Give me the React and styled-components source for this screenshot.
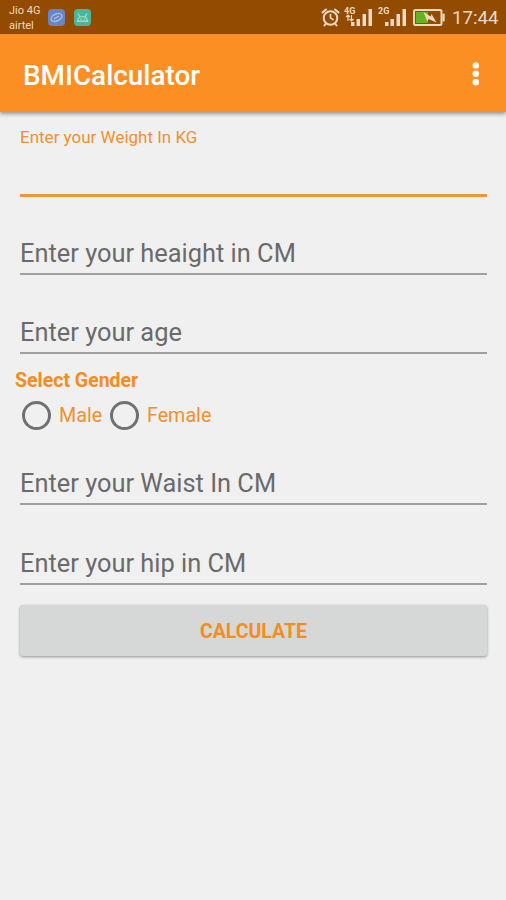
import React, { useState } from "react";
import styled, { createGlobalStyle } from "styled-components";

const GlobalStyle = createGlobalStyle`
  * {
    box-sizing: border-box;
  }

  body {
    margin: 0;
    background-color: #f0f0f0;
    font-family: Roboto, sans-serif;
  }
`;

const Container = styled.div`
  display: flex;
  flex-direction: column;
  width: 506px;
  height: 900px;
  background-color: #f0f0f0;
  overflow: hidden;
`;

const StatusBar = styled.div`
  display: flex;
  flex-direction: row;
  align-items: center;
  justify-content: space-between;
  height: 34px;
  padding: 0 7px 0 9px;
  background-color: #934b00;
  color: #eed9c5;
`;

const StatusGroup = styled.div`
  display: flex;
  flex-direction: row;
  align-items: center;
`;

const Carriers = styled.div`
  display: flex;
  flex-direction: column;
  width: 39px;
  padding-top: 2px;
  font-size: 11px;
  line-height: 15px;
  white-space: nowrap;
`;

const AppIcon = styled.svg`
  width: 17px;
  height: 17px;
  margin-right: 9px;
  border-radius: 4px;
  background-color: ${(props) => props.$color};
`;

const StatusIcon = styled.svg`
  width: ${(props) => props.$width}px;
  height: 24px;
  margin-right: ${(props) => props.$gap}px;
`;

const NetworkType = styled.text`
  font-size: 9px;
  font-weight: bold;
  fill: #eed9c5;
`;

const Clock = styled.div`
  width: 47px;
  font-size: 18.7px;
  line-height: 24px;
  padding-top: 2px;
`;

const Header = styled.div`
  display: flex;
  flex-direction: row;
  align-items: center;
  justify-content: space-between;
  height: 78px;
  padding: 2px 26px 0 23px;
  background-color: #fb8f23;
  color: white;
  box-shadow: 0 2px 4px 0 rgba(0, 0, 0, 0.38);
`;

const AppName = styled.div`
  padding-top: 3px;
  font-size: 27.9px;
  font-weight: 500;
  line-height: 34px;
`;

const MenuIcon = styled.svg`
  width: 9px;
  height: 26px;
`;

const Form = styled.div`
  display: flex;
  flex-direction: column;
  padding: 15px 19px 0 20px;
`;

const FloatingLabel = styled.div`
  color: #f0902e;
  font-size: 17px;
  line-height: 20px;
`;

const Field = styled.label`
  display: flex;
  flex-direction: column;
  justify-content: flex-end;
  height: ${(props) => props.$height}px;
  padding-bottom: 5px;
  border-bottom: ${(props) => (props.$active ? "3px solid #f0963a" : "2px solid #a0a0a0")};
  color: #6a6a6a;
  font-size: 25.4px;
  line-height: 30px;
`;

const GenderTitle = styled.div`
  margin: 15px 0 0 -5px;
  color: #f58d1c;
  font-size: 19.5px;
  font-weight: bold;
  line-height: 24px;
`;

const GenderGroup = styled.div`
  display: flex;
  flex-direction: row;
  align-items: center;
  height: 34px;
  margin: 5px 0 0 2px;
`;

const RadioOption = styled.div`
  display: flex;
  flex-direction: row;
  align-items: center;
  width: ${(props) => props.$width}px;
  color: #f0902e;
  font-size: 19.7px;
  line-height: 24px;
  cursor: pointer;
`;

const RadioCircle = styled.div`
  display: flex;
  align-items: center;
  justify-content: center;
  flex-shrink: 0;
  width: 29px;
  height: 29px;
  margin-right: 8px;
  border: 3px solid #717171;
  border-radius: 50%;
`;

const RadioName = styled.span`
  padding-top: 2px;
`;

const RadioDot = styled.div`
  width: 14px;
  height: 14px;
  border-radius: 50%;
  background-color: #f0902e;
`;

const CalculateButton = styled.button`
  height: 51px;
  margin-top: 20px;
  padding: 2px 0 0;
  border: none;
  border-radius: 3px;
  background-color: #d6d8d7;
  box-shadow: 0 1px 3px 0 rgba(0, 0, 0, 0.4);
  color: #f58d1c;
  font-family: inherit;
  font-size: 19.5px;
  font-weight: bold;
  line-height: 24px;
`;

const SignalIcon = ({ type, sub, width, gap }) => (
  <StatusIcon $width={width} $gap={gap} viewBox={`0 0 ${width} 24`}>
    <NetworkType x="0" y="8.5">{type}</NetworkType>
    {sub && (
      <path
        d="M4 10v6M2 12l2-2 2 2M7.5 10v6M5.5 14l2 2 2-2"
        fill="none"
        stroke="#eed9c5"
        strokeWidth="1.2"
      />
    )}
    <path
      d={`M${width - 21} 17h3.5v4h-3.5zM${width - 15.5} 14h3.5v7h-3.5zM${width - 9.5} 9h3.5v12h-3.5zM${width - 3.5} 4h3.5v17h-3.5z`}
      fill="#eed9c5"
    />
  </StatusIcon>
);

const GENDERS = [
  { name: "Male", width: 88 },
  { name: "Female", width: 110 },
];

function App() {
  const [gender, updateGender] = useState("");

  return (
    <Container>
      <GlobalStyle />
      <StatusBar>
        <StatusGroup>
          <Carriers>
            <span>Jio 4G</span>
            <span>airtel</span>
          </Carriers>
          <AppIcon $color="#6686c8" viewBox="0 0 17 17">
            <g fill="none" stroke="#b3c0da" strokeWidth="1.4">
              <ellipse cx="8.5" cy="8.5" rx="5.8" ry="3.4" transform="rotate(-25 8.5 8.5)" />
              <path d="M6 10l5-3" />
            </g>
          </AppIcon>
          <AppIcon $color="#4ab79c" viewBox="0 0 17 17">
            <path d="M3.5 12.2a5 4.6 0 0 1 10 0z" fill="none" stroke="#a9d8c2" strokeWidth="1.4" />
            <path d="M4 4.5l2 3.4M13 4.5l-2 3.4" stroke="#a9d8c2" strokeWidth="1.3" />
            <path d="M6.2 10.4h1.2M9.8 10.4h1.2" stroke="#a9d8c2" strokeWidth="1.2" />
          </AppIcon>
        </StatusGroup>
        <StatusGroup>
          <StatusIcon $width={19} $gap={4} viewBox="0 0 19 24">
            <g fill="none" stroke="#eed9c5" strokeWidth="2" strokeLinecap="round">
              <circle cx="9.5" cy="13" r="6.8" />
              <path d="M9.5 9.5V13l2.5 1.5" strokeWidth="1.7" />
              <path d="M1.5 7.5l3.5-3M17.5 7.5l-3.5-3M4.5 19l-1 1.5M14.5 19l1 1.5" />
            </g>
          </StatusIcon>
          <SignalIcon type="4G" sub width={28} gap={6} />
          <SignalIcon type="2G" width={28} gap={7} />
          <StatusIcon $width={32} $gap={7} viewBox="0 0 32 24">
            <rect x="1" y="5" width="27.5" height="15" rx="1.5" fill="none" stroke="#eed9c5" strokeWidth="2" />
            <rect x="29.5" y="8.5" width="2.2" height="8" rx="1" fill="#eed9c5" />
            <rect x="3" y="7" width="12" height="11" fill="#67b51c" />
            <path d="M10.5 7l7 4.5 1-2.5 5 8.5-8-3.5-1.2 2.5z" fill="#eed9c5" />
          </StatusIcon>
          <Clock>17:44</Clock>
        </StatusGroup>
      </StatusBar>
      <Header>
        <AppName>BMICalculator</AppName>
        <MenuIcon viewBox="0 0 9 26" fill="white">
          <circle cx="4.8" cy="4.4" r="3.2" />
          <circle cx="4.8" cy="12.8" r="3.2" />
          <circle cx="4.8" cy="21.2" r="3.2" />
        </MenuIcon>
      </Header>
      <Form>
        <FloatingLabel>Enter your Weight In KG</FloatingLabel>
        <Field $height={50} $active />
        <Field $height={78}>Enter your heaight in CM</Field>
        <Field $height={79}>Enter your age</Field>
        <GenderTitle>Select Gender</GenderTitle>
        <GenderGroup>
          {GENDERS.map((item) => (
            <RadioOption
              key={item.name}
              $width={item.width}
              onClick={() => updateGender(item.name)}
            >
              <RadioCircle>{gender === item.name && <RadioDot />}</RadioCircle>
              <RadioName>{item.name}</RadioName>
            </RadioOption>
          ))}
        </GenderGroup>
        <Field $height={73}>Enter your Waist In CM</Field>
        <Field $height={80}>Enter your hip in CM</Field>
        <CalculateButton>CALCULATE</CalculateButton>
      </Form>
    </Container>
  );
}

export default App;
